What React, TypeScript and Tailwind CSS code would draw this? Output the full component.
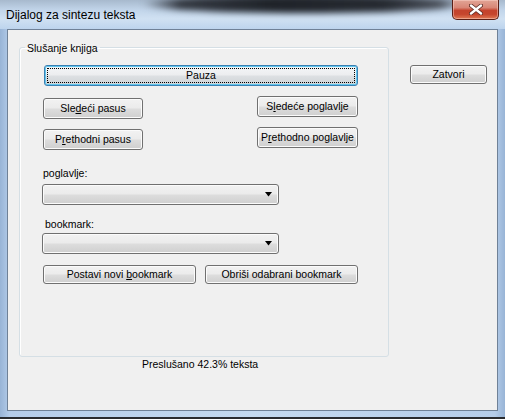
import React from "react";

const btnBase =
  "flex items-center justify-center rounded-[3px] border border-[#707070] bg-[image:linear-gradient(180deg,#f2f2f2_0%,#ebebeb_48%,#dddddd_52%,#cfcfcf_100%)] shadow-[inset_0_0_0_1px_#fbfbfb] text-[10.5px] leading-[13px] text-black";

function Btn({ children, className }: { children: React.ReactNode; className: string }) {
  return <button className={`${btnBase} ${className}`}>{children}</button>;
}

function Combo({ className }: { className: string }) {
  return (
    <div className={`${btnBase} justify-end pr-[5px] ${className}`}>
      <svg width="8" height="5" viewBox="0 0 8 5">
        <path d="M0 0 H7 L3.5 4.5 Z" fill="#000" />
      </svg>
    </div>
  );
}

export default function App() {
  return (
    <div className="w-[505px] h-[419px] flex flex-col overflow-hidden font-['Liberation_Sans',Arial,sans-serif] bg-[#bdd3ec] bg-[image:linear-gradient(90deg,#98b4d6_0%,#b5cdea_2%,#c4d9ef_50%,#b5cdea_98%,#98b4d6_100%)]">
      {/* title bar */}
      <div className="h-[29px] shrink-0 flex items-start overflow-hidden bg-[image:linear-gradient(180deg,#a7b9cd_0%,#c2d5ea_35%,#d0e1f2_65%,#bdd4ed_100%)]">
        <span className="pl-[6px] pt-[8px] text-[12px] leading-[15px] text-black">
          Dijalog za sintezu teksta
        </span>
        <div className="flex-1 ml-[6px] -mr-[14px] mt-[-5px] h-[18px] rounded-[50%] blur-[3px] bg-[image:linear-gradient(90deg,rgba(60,66,78,0)_0%,#343942_12%,#1f2329_40%,#262a31_75%,#4a505a_92%,rgba(60,66,78,0)_100%)]" />
        <div className="relative mr-[6px] w-[47px] h-[20px] rounded-b-[5px] border border-t-0 border-[#5a1f16] bg-[image:linear-gradient(180deg,#e2a596_0%,#d88676_40%,#c4432d_55%,#c5452d_75%,#e07a55_100%)] shadow-[inset_0_0_0_1px_rgba(255,220,210,0.45)] flex items-center justify-center">
          <svg width="14" height="11" viewBox="0 0 14 11">
            <path d="M2 1.5 L12 9.5 M12 1.5 L2 9.5" stroke="#5a2a22" strokeWidth="4" strokeLinecap="round" />
            <path d="M2 1.5 L12 9.5 M12 1.5 L2 9.5" stroke="#ffffff" strokeWidth="2.4" strokeLinecap="round" />
          </svg>
        </div>
      </div>

      {/* client area */}
      <div className="mx-[7px] h-[382px] shrink-0 border border-[#6f8197] bg-[#f0f0f0] flex items-start text-[10.5px] text-black">
        <div className="ml-[11px] mt-[11px] flex flex-col">
          <fieldset className="w-[370px] h-[316px] border border-[#d5dfe5] rounded-[3px] shadow-[inset_1px_1px_0_#ffffff] flex flex-col items-start">
            <legend className="ml-[5px] px-[2px] leading-[12px] text-[10.5px]">
              <span className="relative top-[1px]">Slušanje knjiga</span>
            </legend>
            <button className="ml-[24px] mt-[12px] w-[314px] h-[21px] rounded-[3px] border border-[#3c7fb1] bg-[image:linear-gradient(180deg,#f4f6f8_0%,#ecedef_48%,#dde0e3_52%,#cfd3d6_100%)] shadow-[inset_0_0_0_1px_#5fc6ef] p-[2px] text-[10.5px] leading-[13px]">
              <div className="w-full h-full border border-dotted border-black flex items-center justify-center">
                Pauza
              </div>
            </button>
            <div className="mt-[10px] flex items-start">
              <Btn className="ml-[23px] mt-[2px] w-[100px] h-[21px]">
                <span>
                  Sle<u>d</u>eći pasus
                </span>
              </Btn>
              <Btn className="ml-[114px] w-[101px] h-[21px]">
                <span>
                  S<u>l</u>edeće poglavlje
                </span>
              </Btn>
            </div>
            <div className="mt-[8px] flex items-start">
              <Btn className="ml-[23px] mt-[2px] w-[100px] h-[21px]">
                <span>
                  P<u>r</u>ethodni pasus
                </span>
              </Btn>
              <Btn className="ml-[114px] w-[101px] h-[21px]">
                <span>
                  P<u>r</u>ethodno poglavlje
                </span>
              </Btn>
            </div>
            <div className="ml-[23px] mt-[17px] leading-[13px]">poglavlje:</div>
            <Combo className="ml-[22px] mt-[4px] w-[237px] h-[21px]" />
            <div className="ml-[25px] mt-[13px] leading-[13px]">bookmark:</div>
            <Combo className="ml-[22px] mt-[2px] w-[237px] h-[21px]" />
            <div className="mt-[11px] flex">
              <Btn className="ml-[23px] w-[153px] h-[19px]">
                <span>
                  Postavi novi <u>b</u>ookmark
                </span>
              </Btn>
              <Btn className="ml-[9px] w-[153px] h-[19px]">Obriši odabrani bookmark</Btn>
            </div>
          </fieldset>
          <div className="ml-[123px] mt-[1px] leading-[13px]">Preslušano 42.3% teksta</div>
        </div>
        <Btn className="ml-[21px] mt-[35px] w-[77px] h-[19px]">Zatvori</Btn>
      </div>

      <div className="mt-auto h-[2px] bg-[#2a2c30]" />
    </div>
  );
}
